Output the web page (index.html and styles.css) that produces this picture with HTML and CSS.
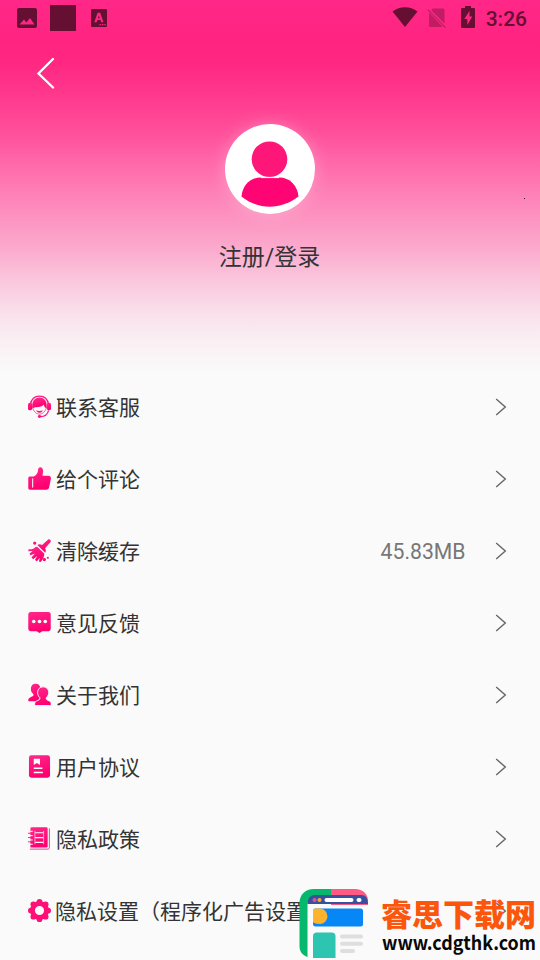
FILE: index.html
```html
<!DOCTYPE html>
<html lang="zh-CN">
<head>
<meta charset="utf-8">
<title>我的</title>
<link rel="stylesheet" href="styles.css">
</head>
<body>
<svg class="defs" width="0" height="0" aria-hidden="true">
  <defs>
    <linearGradient id="pink" x1="0" y1="0" x2="0.3" y2="1"><stop offset="0" stop-color="#ff2a8b"/><stop offset="1" stop-color="#ff0070"/></linearGradient>
    <symbol id="chevron" viewBox="0 0 12 18"><path d="M1.2 1 10.3 9l-9.1 8" fill="none" stroke="#666" stroke-width="1.4"/></symbol>
  </defs>
</svg>
<div class="screen">
  <header class="hero">
    <div class="status">
      <div class="status-left">
        <svg width="20" height="20" viewBox="0 0 20 20"><path fill-rule="evenodd" d="M2 0h16a2 2 0 0 1 2 2v16a2 2 0 0 1-2 2H2a2 2 0 0 1-2-2V2a2 2 0 0 1 2-2Zm.500 16.500h15L13 10l-3.600 4.500-2.400-2.900Z"/></svg>
        <span class="block"></span>
        <svg width="16" height="18" viewBox="0 0 16 18"><path fill-rule="evenodd" d="M1 0h14a1 1 0 0 1 1 1v16a1 1 0 0 1-1 1H1a1 1 0 0 1-1-1V1a1 1 0 0 1 1-1ZM3.300 13.200h2.300l.8-2.200h3l.8 2.200h2.300L9.200 3.800H6.600Zm3.700-4 .9-2.800.9 2.800ZM8.500 15v1.200h1.400V15Zm2.500 0v1.200h1.400V15Zm2.500 0v1.200h1.400V15Z"/></svg>
      </div>
      <div class="status-right">
        <svg width="26" height="20" viewBox="0 0 26 20"><path d="M.5 4.500C7.500-1.200 18.500-1.200 25.500 4.500L13 20Z"/></svg>
        <svg class="nosim" width="20" height="20" viewBox="0 0 20 20"><path d="M6 .5h10a1.500 1.500 0 0 1 1.500 1.500v13.400L4.200 2.200ZM2 4.500 15.700 19H3.500A1.500 1.500 0 0 1 2 17.500Z"/><path d="m.8 1.600 17.700 18" fill="none" stroke="#651033" stroke-width="1.300"/></svg>
        <svg width="14" height="22" viewBox="0 0 14 22"><path fill-rule="evenodd" d="M4 0h6v2h3a1 1 0 0 1 1 1v18a1 1 0 0 1-1 1H1a1 1 0 0 1-1-1V3a1 1 0 0 1 1-1h3Zm4.500 5L3.300 13h3v6l5-8.500H8.500Z"/></svg>
        <span class="clock">3:26</span>
      </div>
    </div>
    <svg class="back" width="20" height="32" viewBox="0 0 20 32"><path d="M17 2 2.500 16.500 17 30.500" fill="none" stroke="#fff" stroke-width="2.300" stroke-linecap="round"/></svg>
    <div class="avatar">
      <svg width="90" height="90" viewBox="0 0 90 90"><circle cx="44.500" cy="35.200" r="17.800" fill="#ff1679"/><path d="M36 53.500h18c11 0 18.500 8 19.500 19C56 86 33 86 16.500 72.500 17.500 61.500 25 53.500 36 53.500Z" fill="#ff0473"/><path d="M36 53.500h18" stroke="#fff" stroke-width="1.200"/></svg>
    </div>
    <div class="login">注册/登录</div>
    <span class="speck"></span>
  </header>
  <main class="menu">
    <div class="row">
      <svg class="icon" viewBox="0 0 24 24"><path d="M2.500 10C3.500 4 7 1.200 12 1.200S20.500 4 21.500 10" fill="none" stroke="#ff1a80" stroke-width="1.500"/><rect x="0" y="8" width="4.200" height="8" rx="2"/><rect x="19.800" y="8" width="4.200" height="8" rx="2"/><path d="M4.600 14C3.500 6.500 7.300 2.700 12 2.700s8.500 3.800 7.400 11.300c-1.600-.7-2.600-2-3.100-4-1 2.300-5.500 3.200-9 2.800-.8.100-1.600 1-2.700 1.200Z"/><path d="M4.800 12.500c.6 4 3.300 7.500 7.200 7.500s6.600-3.500 7.200-7.500" fill="none" stroke="#ff1a80" stroke-width=".7"/><path d="M8.500 16c2 .8 5 .8 7 0-.5 1.500-1.800 2.500-3.500 2.500s-3-1-3.500-2.500Z"/><path d="M21.500 16c-1 4-4.500 6.500-8.500 6.500" fill="none" stroke="#ff1a80" stroke-width="1.300"/><circle cx="12" cy="22.300" r="1.600"/></svg>
      <span class="label">联系客服</span><svg class="go"><use href="#chevron"/></svg>
    </div>
    <div class="row">
      <svg class="icon" viewBox="0 0 24 24"><path d="M2 9.800h4c3.200-1.500 4.200-3.800 4.500-6.800C10.700 1.300 11.500.3 12.700.3c2 0 3.300 2 3 4.700l-.6 4h6.300c1.800 0 2.800 1.400 2.500 3l-1.800 9.200c-.3 1.600-1.400 2.500-3 2.500H2c-1 0-1.700-.7-1.700-1.700V11.500c0-1 .7-1.700 1.700-1.700Z"/><path d="M4.800 12v9.500" stroke="#ffd9e8" stroke-width="1.300"/></svg>
      <span class="label">给个评论</span><svg class="go"><use href="#chevron"/></svg>
    </div>
    <div class="row">
      <svg class="icon" viewBox="0 0 24 24"><path d="M20.800.8c1.500-1.500 4 .8 2.600 2.600l-5.600 6.200c1 1.500 1 3.200.2 4.700L9.700 6.200c1.600-1 3.500-.9 5 .1Z"/><path d="m8.800 7.200 8.300 8.300c-.5 3.500-1.700 6.200-4 8.500l-1.700-.5.900-4-3 3.700-2-1.200 2.300-4.200-4.200 3.200-1.700-1.700 3.500-4.300-4.500 2-1.200-1.500 3.300-3-4.500.2.200-1.900c3.600.2 6.100-.8 8.600-3.600Z"/><circle cx="7" cy="4.300" r="1.700"/><circle cx="17" cy="21.300" r="1.800"/><circle cx="20.700" cy="19.500" r="1.100"/></svg>
      <span class="label">清除缓存</span><span class="value">45.83MB</span><svg class="go"><use href="#chevron"/></svg>
    </div>
    <div class="row">
      <svg class="icon" viewBox="0 0 24 24"><path d="M3 1h18a2.700 2.700 0 0 1 2.700 2.700v14.800A2.500 2.500 0 0 1 21 21h-6l-3 2-3-2H3a2.500 2.500 0 0 1-2.700-2.500V3.700A2.700 2.700 0 0 1 3 1Z"/><g fill="#fff"><circle cx="6" cy="11" r="1.900"/><circle cx="12" cy="11" r="1.900"/><circle cx="18" cy="11" r="1.900"/></g></svg>
      <span class="label">意见反馈</span><svg class="go"><use href="#chevron"/></svg>
    </div>
    <div class="row">
      <svg class="icon" viewBox="0 0 24 24"><path d="M8 .7c3 0 5 2 5 5.300 0 2.500-.8 4.500-2.300 5.700-.3 1.700.4 2.500 2 3.200L10 19H1c-1 0-1-2 0-3.200 1.600-1.300 3.700-1.500 4.500-2.500.4-.7.300-1.500-.2-2C3.700 10 3 8.300 3 6 3 2.700 5 .7 8 .7Z"/><path d="M15.800 4c3.400 0 5.800 2.400 5.800 5.700 0 2.400-.9 4.300-2.500 5.500-.4 1.600.3 2.300 1.900 3 2 .7 3.300 1.600 3.300 3.700 0 1.200-.7 1.700-1.700 1.700H8.600c-1 0-1.700-.6-1.700-1.700 0-2.100 1.400-3 3.400-3.700 1.700-.7 2.400-1.400 2-3-1.500-1.200-2.300-3.100-2.300-5.500C10 6.400 12.400 4 15.800 4Z" stroke="#fafafa" stroke-width="1"/></svg>
      <span class="label">关于我们</span><svg class="go"><use href="#chevron"/></svg>
    </div>
    <div class="row">
      <svg class="icon" viewBox="0 0 24 24"><rect x="1" y=".3" width="22" height="23.400" rx="2.500"/><path d="M6 4h6.500v6.500L9.250 8.400 6 10.500ZM6 13h9v1.600H6Zm0 4.500h9.500v1.600H6Z" fill="#fff"/></svg>
      <span class="label">用户协议</span><svg class="go"><use href="#chevron"/></svg>
    </div>
    <div class="row">
      <svg class="icon" viewBox="0 0 24 24"><path d="M4 .3h15a1.500 1.500 0 0 1 1.500 1.500V20a1.500 1.500 0 0 1-1.500 1.500H2.500V1.800A1.500 1.500 0 0 1 4 .3Z"/><path d="M22.300 1.500v20c0 1-.6 1.600-1.500 1.600H2" fill="none" stroke="#ff1a80" stroke-width=".9"/><path d="M7.500 6H16M7.500 11H16M7.500 16H16" stroke="#fff" stroke-width="1.300" fill="none"/><path d="M7.200 4v14M16.300 4v14" stroke="#fff" stroke-width=".6"/><path d="M1 4.500h4M1 9h4M1 13.500h4M1 18h4" stroke="#fff" stroke-width="1"/><path d="M0 6.500h3M0 11h3M0 15.500h3" stroke="#ff1a80"/></svg>
      <span class="label">隐私政策</span><svg class="go"><use href="#chevron"/></svg>
    </div>
    <div class="row">
      <svg class="icon" viewBox="0 0 24 24"><circle cx="12" cy="12" r="7.300" fill="none" stroke="#ff1077" stroke-width="5"/><g fill="#ff1077"><circle cx="12" cy="3" r="3"/><circle cx="18.400" cy="5.600" r="3"/><circle cx="21" cy="12" r="3"/><circle cx="18.400" cy="18.400" r="3"/><circle cx="12" cy="21" r="3"/><circle cx="5.600" cy="18.400" r="3"/><circle cx="3" cy="12" r="3"/><circle cx="5.600" cy="5.600" r="3"/></g></svg>
      <span class="label shifted">隐私设置（程序化广告设置）</span><svg class="go"><use href="#chevron"/></svg>
    </div>
  </main>
  <aside class="brand">
    <svg class="brand-logo" width="72" height="72" viewBox="0 0 72 72">
      <path d="M9 14h61v53q0 4-4 4H9Z" fill="#fafafa"/>
      <path d="M32 1h24c8 0 13 5 13 12v4H32Z" fill="#ff5a83"/>
      <path d="M32 1H15C6 1 .5 7 .5 15v43c0 6 3 9 8 11V17q0-9 8-9H32Z" fill="#06b86e"/>
      <path d="M8.500 16q0-9 8-9h46q6.500 0 6.500 9H8.500Z" fill="#38519e"/>
      <circle cx="15.500" cy="12" r="2" fill="#e9518e"/><circle cx="20.500" cy="12" r="2" fill="#f9ab2c"/>
      <rect x="25.500" y="10" width="29" height="4" rx="2" fill="#fff"/><rect x="57.500" y="10" width="5" height="4" rx="2" fill="#fff"/>
      <rect x="14" y="20.500" width="50" height="18" rx="2.500" fill="#0786f5"/>
      <path d="M14 23q0-2.500 2.500-2.500h5a7.800 7.800 0 0 1 0 15.500c-4 0-7-1-7.500-2Z" fill="#ffb32c"/>
      <path d="M14 70V48q0-3.500 4-3.500h14.500q4 0 4 4V70Z" fill="#2dc4b2"/>
      <path d="M43 48.500h19M43 55.800h19M43 63h11" stroke="#dedede" stroke-width="4" stroke-linecap="round"/>
    </svg>
    <div class="brand-text">
      <div class="brand-name">睿思下载网</div>
      <svg class="brand-url" width="156" height="22" viewBox="0 0 156 22"><text x="0" y="15.500" textLength="154" lengthAdjust="spacingAndGlyphs">www.cdgthk.com</text></svg>
    </div>
  </aside>
</div>
</body>
</html>
```
FILE: styles.css
```css
* { box-sizing: border-box; }
body { margin: 0; }
.defs { display: block; }
.screen {
  position: relative;
  width: 540px;
  height: 960px;
  overflow: hidden;
  background: #fafafa;
  font-family: Roboto, "Noto Sans CJK SC", sans-serif;
  color: #333;
}
.hero {
  position: relative;
  height: 371px;
  display: flex;
  flex-direction: column;
  align-items: center;
  background: linear-gradient(#ff2788 0, #ff2480 42px, #ff2781 62px, #ff3a8e 98px, #ff509b 133px, #ff6bab 167px, #fd89bb 205px, #fbaacd 248px, #fac6dd 280px, #f9dce8 307px, #faedf2 337px, #fafafa 371px);
}
.status {
  width: 100%;
  height: 36px;
  display: flex;
  align-items: center;
  justify-content: space-between;
  padding: 0 13px 0 17px;
  fill: #651033;
}
.status-left, .status-right { display: flex; align-items: center; }
.block { width: 26px; height: 26px; margin: 0 15px 0 13px; background: #651033; }
.status-right svg { position: relative; top: -1px; }
.status-right .nosim { top: 0; margin: 0 14px 0 9px; opacity: .4; }
.clock { margin-left: 11px; padding-top: 1px; font-size: 21px; font-weight: 500; line-height: 24px; color: #651033; }
.back { align-self: flex-start; margin: 21px 0 0 36px; }
.avatar {
  width: 90px;
  height: 90px;
  margin: 35.4px 1px 0 0;
  border-radius: 50%;
  background: #fff;
  box-shadow: 0 0 18px rgba(255, 255, 255, .28);
}
.login { margin: 26.6px 1px 0 0; font-size: 23px; line-height: 34px; }
.speck { position: absolute; left: 524px; top: 198px; width: 1px; height: 1px; background: #222; }
.row { display: flex; align-items: center; height: 72px; padding: 0 33.500px 0 28px; }
.icon { flex: none; width: 23px; height: 23px; margin: -1px 5px 0 0; fill: url(#pink); }
.label { flex: 1; font-size: 21px; line-height: 30px; white-space: nowrap; padding-top: 2px; }
.shifted { margin-left: -1px; }
.value { margin-right: 29px; padding-top: 1px; font-size: 21.2px; color: #777; }
.go { flex: none; width: 12px; height: 18px; }
.brand { position: absolute; left: 299px; top: 888px; display: flex; height: 72px; }
.brand-text { padding: 2px 0 0 10px; white-space: nowrap; }
.brand-name { font-family: "Noto Sans CJK SC", sans-serif; font-size: 31px; font-weight: 900; line-height: 46px; color: #fb560c; }
.brand-url { display: block; margin: -2px 0 0 1px; font-family: "Noto Sans CJK SC", sans-serif; font-size: 19px; font-weight: 700; fill: #080808; overflow: visible; }
```
